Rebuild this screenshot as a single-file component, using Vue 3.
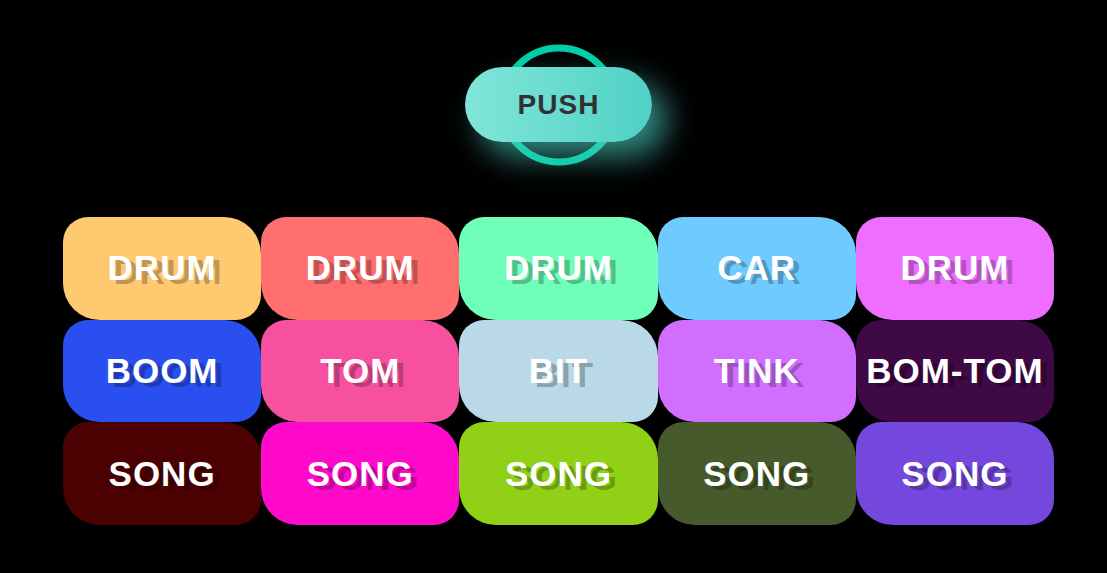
<script setup>
const pads = [
  { name: 'DRUM', tone: 'amber' },
  { name: 'DRUM', tone: 'coral' },
  { name: 'DRUM', tone: 'mint' },
  { name: 'CAR', tone: 'sky' },
  { name: 'DRUM', tone: 'orchid' },
  { name: 'BOOM', tone: 'blue' },
  { name: 'TOM', tone: 'rose' },
  { name: 'BIT', tone: 'ice' },
  { name: 'TINK', tone: 'violet' },
  { name: 'BOM-TOM', tone: 'plum' },
  { name: 'SONG', tone: 'maroon' },
  { name: 'SONG', tone: 'magenta' },
  { name: 'SONG', tone: 'lime' },
  { name: 'SONG', tone: 'olive' },
  { name: 'SONG', tone: 'indigo' },
]
</script>

<template>
  <main class="board">
    <button class="push" type="button">PUSH</button>
    <section class="pads" aria-label="Sound pads">
      <button v-for="(pad, i) in pads" :key="i" type="button" class="pad" :class="pad.tone">
        {{ pad.name }}
      </button>
    </section>
  </main>
</template>

<style>
body {
  margin: 0;
  background: #000;
}
</style>

<style scoped>
.board {
  display: flex;
  flex-direction: column;
  align-items: center;
  gap: 75px;
  padding: 67px 53px 48px 63px;
  font-family: "Liberation Sans", Arial, sans-serif;
}

button {
  border: 0;
  font-family: inherit;
  font-weight: 700;
  cursor: pointer;
}

.push {
  position: relative;
  z-index: 0;
  min-width: 187px;
  min-height: 75px;
  padding: 0 24px;
  border-radius: 38px;
  background: transparent;
  color: #313133;
  font-size: 28px;
  letter-spacing: 1px;
}

.push::before,
.push::after {
  content: "";
  position: absolute;
}

.push::before {
  z-index: -1;
  inset: 0;
  border-radius: 38px;
  background: linear-gradient(90deg, #81e6d9 0%, #4fd1c5 100%);
  box-shadow: 15px 15px 30px rgba(79, 209, 197, 0.64);
}

.push::after {
  z-index: -2;
  top: 50%;
  left: 50%;
  box-sizing: border-box;
  width: 121px;
  height: 121px;
  border: 7px solid #00cfa6;
  border-radius: 50%;
  transform: translate(-50%, -50%);
}

.pads {
  align-self: stretch;
  display: grid;
  grid-template-columns: repeat(5, minmax(0, 1fr));
  grid-auto-rows: 1fr;
  min-height: 308px;
}

.pad {
  min-height: 102px;
  padding: 0;
  border-radius: 25px 37px;
  color: #fff;
  font-size: 35px;
  letter-spacing: 1px;
  text-shadow: 6px 4px 0 rgba(0, 0, 0, 0.25);
}

.amber { background: #ffc96f; }
.coral { background: #ff6f6f; }
.mint { background: #6fffb9; }
.sky { background: #6fcaff; }
.orchid { background: #ee6fff; }
.blue { background: #294ff0; }
.rose { background: #f6509f; }
.ice { background: #bad9e8; }
.violet { background: #d06fff; }
.plum { background: #3f0945; }
.maroon { background: #4b0101; }
.magenta { background: #ff09cb; }
.lime { background: #90d118; }
.olive { background: #465a2b; }
.indigo { background: #7447dd; }
</style>
